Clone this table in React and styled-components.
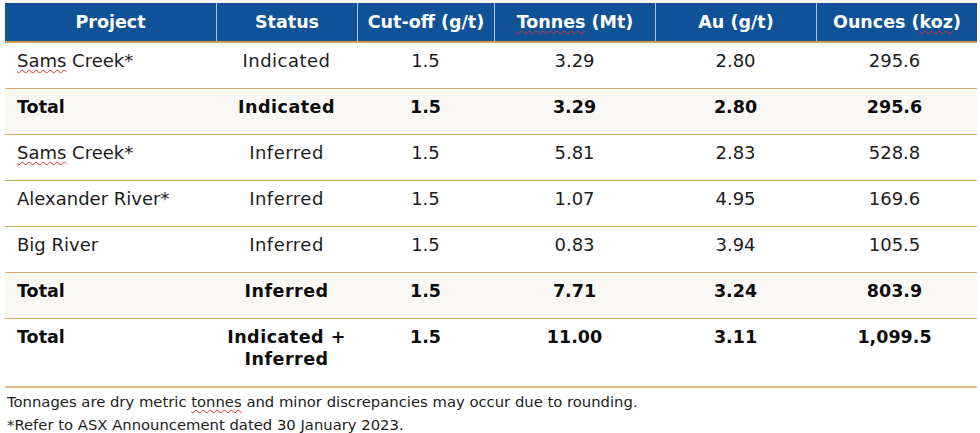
import React from "react";
import styled, { createGlobalStyle } from "styled-components";

const Global = createGlobalStyle`
  html, body { margin: 0; padding: 0; background: #ffffff; }
  body { font-family: "DejaVu Sans", Verdana, sans-serif; }
`;

const Page = styled.div`
  width: 980px;
  height: 433px;
  padding: 3px 3px 0 5px;
  box-sizing: border-box;
  overflow: hidden;
`;

const COLS = "211px 141px 137px 161px 161px 161px";

const HeadRow = styled.div`
  display: grid;
  grid-template-columns: ${COLS};
  height: 38px;
  background: #0f5297;
  border-bottom: 2px solid #d49e48;
`;

const HeadCell = styled.div`
  display: flex;
  align-items: center;
  justify-content: center;
  color: #ffffff;
  font-weight: bold;
  font-size: 17.5px;
  border-left: ${(p) => (p.$first ? "none" : "1.5px solid #a9c4e4")};
`;

const Row = styled.div`
  display: grid;
  grid-template-columns: ${COLS};
  height: ${(p) => p.$h || 46}px;
  box-sizing: border-box;
  background: ${(p) => (p.$total ? "#f9f8f4" : "#ffffff")};
  border-bottom: ${(p) => (p.$last ? "2px solid #dcbb8c" : "1px solid #d6a865")};
`;

const Cell = styled.div`
  padding-top: 7px;
  font-size: ${(p) => (p.$bold ? 17.5 : 18)}px;
  line-height: 22px;
  letter-spacing: ${(p) => p.$ls || 0}px;
  color: ${(p) => (p.$bold ? "#0d0d0d" : "#1c1c1c")};
  font-weight: ${(p) => (p.$bold ? "bold" : "normal")};
  text-align: ${(p) => (p.$left ? "left" : "center")};
  padding-left: ${(p) => (p.$left ? "12px" : "0")};
  padding-right: ${(p) => p.$pr || 0}px;
  white-space: nowrap;
`;

const Squiggle = styled.span`
  text-decoration: underline wavy #e03030;
  text-decoration-thickness: 1px;
  text-underline-offset: 2px;
`;

const Footer = styled.div`
  font-size: 14.8px;
  line-height: 23px;
  color: #1c1c1c;
  padding-left: 2px;
  margin-top: 2px;
`;

const rows = [
  { p: <><Squiggle>Sams</Squiggle> Creek*</>, s: "Indicated", c: "1.5", t: "3.29", a: "2.80", o: "295.6" },
  { p: "Total", s: "Indicated", c: "1.5", t: "3.29", a: "2.80", o: "295.6", total: true },
  { p: <><Squiggle>Sams</Squiggle> Creek*</>, s: "Inferred", c: "1.5", t: "5.81", a: "2.83", o: "528.8" },
  { p: "Alexander River*", s: "Inferred", c: "1.5", t: "1.07", a: "4.95", o: "169.6" },
  { p: "Big River", s: "Inferred", c: "1.5", t: "0.83", a: "3.94", o: "105.5" },
  { p: "Total", s: "Inferred", c: "1.5", t: "7.71", a: "3.24", o: "803.9", total: true },
  { p: "Total", s: <>Indicated +<br />Inferred</>, c: "1.5", t: "11.00", a: "3.11", o: "1,099.5", bold: true, last: true, h: 69 },
];

export default function App() {
  return (
    <>
      <Global />
      <Page>
        <HeadRow>
          <HeadCell $first>Project</HeadCell>
          <HeadCell>Status</HeadCell>
          <HeadCell>Cut-off (g/t)</HeadCell>
          <HeadCell><span><Squiggle>Tonnes</Squiggle> (Mt)</span></HeadCell>
          <HeadCell>Au (g/t)</HeadCell>
          <HeadCell><span>Ounces (<Squiggle>koz</Squiggle>)</span></HeadCell>
        </HeadRow>
        {rows.map((r, i) => {
          const b = r.total || r.bold;
          return (
            <Row key={i} $total={r.total} $last={r.last} $h={r.h}>
              <Cell $left $bold={b}>{r.p}</Cell>
              <Cell $bold={b} $ls={0.5}>{r.s}</Cell>
              <Cell $bold={b}>{r.c}</Cell>
              <Cell $bold={b}>{r.t}</Cell>
              <Cell $bold={b}>{r.a}</Cell>
              <Cell $bold={b} $pr={4}>{r.o}</Cell>
            </Row>
          );
        })}
        <Footer>
          <div>Tonnages are dry metric <Squiggle>tonnes</Squiggle> and minor discrepancies may occur due to rounding.</div>
          <div>*Refer to ASX Announcement dated 30 January 2023.</div>
        </Footer>
      </Page>
    </>
  );
}
